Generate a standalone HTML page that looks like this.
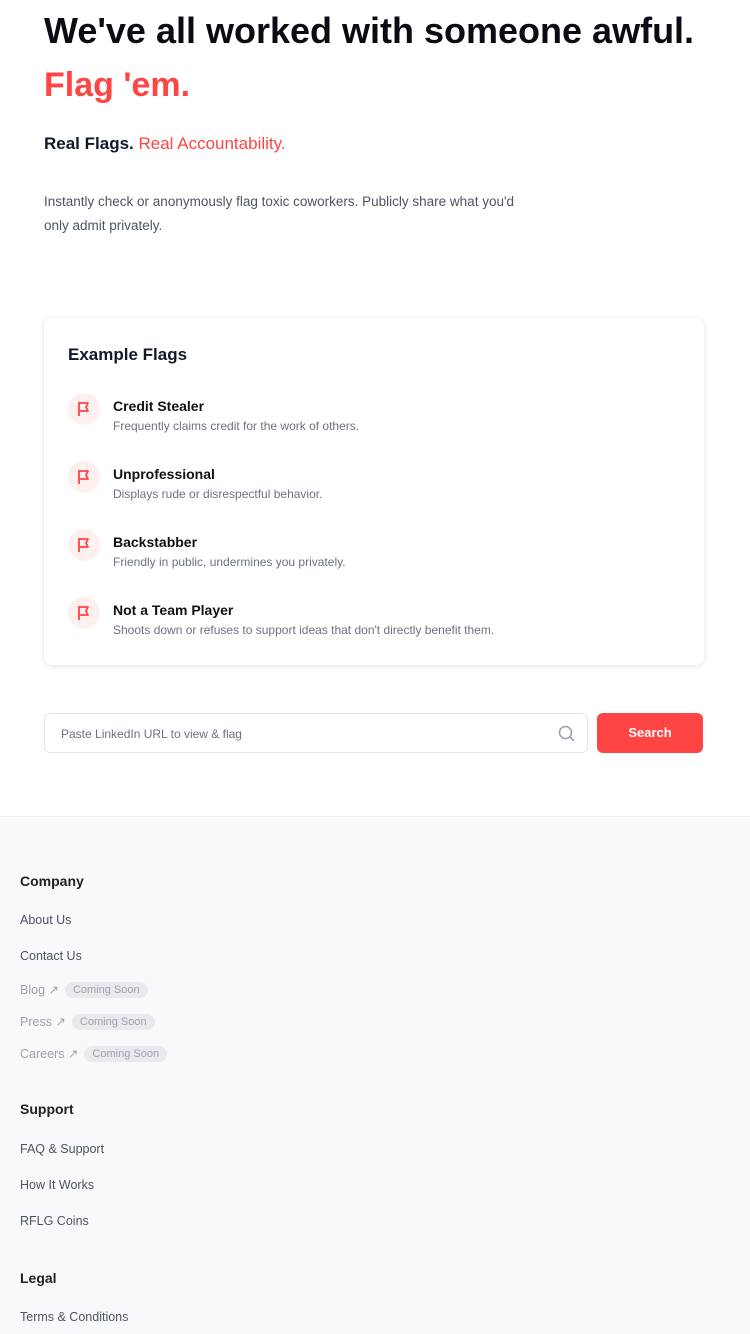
<!DOCTYPE html>
<html><head><meta charset="utf-8"><style>
*{margin:0;padding:0;box-sizing:border-box}
body{width:750px;height:1334px;overflow:hidden;background:#fff;font-family:"Liberation Sans",sans-serif;color:#111827;position:relative}
.a{position:absolute;white-space:nowrap}
.red{color:#ff4444}
.card{position:absolute;left:44px;top:318px;width:660px;height:347px;border-radius:8px;box-shadow:0 1px 6px rgba(0,0,0,.12);background:#fff}
.ic{position:absolute;left:24px;width:32px;height:32px;border-radius:50%;background:#fff0f0}
.t{position:absolute;left:69px;font-size:14px;font-weight:bold;color:#111}
.d{position:absolute;left:69px;font-size:12px;color:#6b7280}
.foot{position:absolute;left:0;top:816px;width:750px;height:518px;background:#f8f9fb;border-top:1px solid #eef0f3}
.h{position:absolute;left:20px;font-size:14px;font-weight:bold;color:#222}
.l{position:absolute;left:20px;font-size:12.5px;color:#4b5563}
.g{color:#9ca3af}
.pill{display:inline-block;background:#e9eaee;color:#9ca3af;font-size:11px;border-radius:10px;padding:2px 8px;margin-left:6px;vertical-align:1px}
</style></head><body>
<div class="a" style="left:44px;top:10px;font-size:36px;font-weight:bold;color:#0b0b14">We've all worked with someone awful.</div>
<div class="a red" style="left:44px;top:66px;font-size:34px;font-weight:bold">Flag 'em.</div>
<div class="a" style="left:44px;top:134px;font-size:17px;font-weight:bold">Real Flags. <span class="red" style="font-weight:normal">Real Accountability.</span></div>
<div class="a" style="left:44px;top:190px;font-size:13.5px;color:#4b5563;line-height:24px">Instantly check or anonymously flag toxic coworkers. Publicly share what you'd<br>only admit privately.</div>
<div class="card">
<div class="a" style="left:24px;top:27px;font-size:17px;font-weight:bold">Example Flags</div>
<svg width="0" height="0" style="position:absolute"><defs><g id="f"><path d="M11 9v14M11 10h9l-2 4 2 4h-9" fill="none" stroke="#ff4444" stroke-width="1.8" stroke-linejoin="round"/></g></defs></svg>
<div class="ic" style="top:75px"><svg width="32" height="32"><use href="#f"/></svg></div>
<div class="t" style="top:80px">Credit Stealer</div><div class="d" style="top:101px">Frequently claims credit for the work of others.</div>
<div class="ic" style="top:143px"><svg width="32" height="32"><use href="#f"/></svg></div>
<div class="t" style="top:148px">Unprofessional</div><div class="d" style="top:169px">Displays rude or disrespectful behavior.</div>
<div class="ic" style="top:211px"><svg width="32" height="32"><use href="#f"/></svg></div>
<div class="t" style="top:216px">Backstabber</div><div class="d" style="top:237px">Friendly in public, undermines you privately.</div>
<div class="ic" style="top:279px"><svg width="32" height="32"><use href="#f"/></svg></div>
<div class="t" style="top:284px">Not a Team Player</div><div class="d" style="top:305px">Shoots down or refuses to support ideas that don't directly benefit them.</div>
</div>
<div class="a" style="left:44px;top:713px;width:544px;height:40px;border:1px solid #e2e4e8;border-radius:6px"></div>
<div class="a" style="left:61px;top:727px;font-size:12px;color:#6b7280">Paste LinkedIn URL to view &amp; flag</div>
<svg class="a" style="left:557px;top:724px" width="20" height="20"><circle cx="8.5" cy="8.5" r="6" fill="none" stroke="#9ca3af" stroke-width="1.6"/><path d="M13 13l4 4" stroke="#9ca3af" stroke-width="1.6"/></svg>
<div class="a" style="left:597px;top:713px;width:106px;height:40px;background:#ff4444;border-radius:6px;color:#fff;font-size:13px;font-weight:bold;text-align:center;line-height:40px">Search</div>
<div class="foot">
<div class="h" style="top:56px">Company</div>
<div class="l" style="top:96px">About Us</div>
<div class="l" style="top:132px">Contact Us</div>
<div class="l g" style="top:165px">Blog ↗<span class="pill">Coming Soon</span></div>
<div class="l g" style="top:197px">Press ↗<span class="pill">Coming Soon</span></div>
<div class="l g" style="top:229px">Careers ↗<span class="pill">Coming Soon</span></div>
<div class="h" style="top:284px">Support</div>
<div class="l" style="top:325px">FAQ &amp; Support</div>
<div class="l" style="top:361px">How It Works</div>
<div class="l" style="top:397px">RFLG Coins</div>
<div class="h" style="top:453px">Legal</div>
<div class="l" style="top:493px">Terms &amp; Conditions</div>
</div>
</body></html>
